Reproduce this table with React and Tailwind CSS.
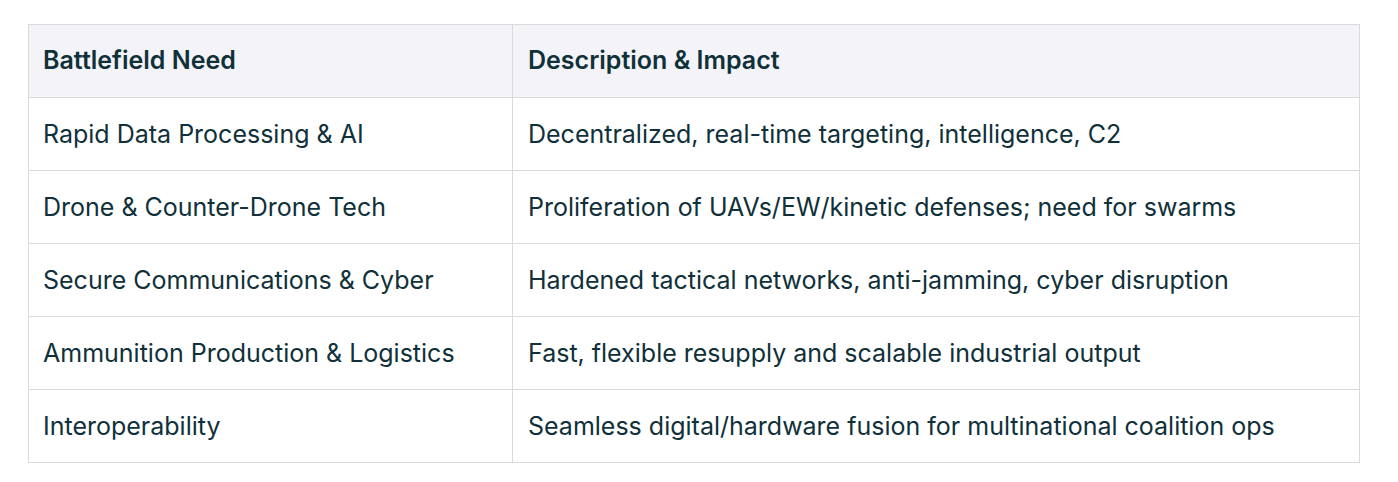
const rows = [
  ['Rapid Data Processing & AI', 'Decentralized, real-time targeting, intelligence, C2'],
  ['Drone & Counter-Drone Tech', 'Proliferation of UAVs/EW/kinetic defenses; need for swarms'],
  ['Secure Communications & Cyber', 'Hardened tactical networks, anti-jamming, cyber disruption'],
  ['Ammunition Production & Logistics', 'Fast, flexible resupply and scalable industrial output'],
  ['Interoperability', 'Seamless digital/hardware fusion for multinational coalition ops'],
]

export default function App() {
  return (
    <div className="bg-white min-h-screen pt-6 pl-7 pr-[38px]" style={{ fontFamily: 'Inter, "Noto Sans", sans-serif' }}>
      <table className="w-[1332px] border-collapse text-[25px] text-[#10303a]">
        <thead>
          <tr className="bg-[#f4f4f8] h-[73px]">
            <th className="w-[484px] border border-[#dadadd] pl-[14px] pr-[15px] text-left font-semibold">Battlefield Need</th>
            <th className="border border-[#dadadd] px-[15px] text-left font-semibold">Description &amp; Impact</th>
          </tr>
        </thead>
        <tbody>
          {rows.map(([need, desc]) => (
            <tr key={need} className="h-[73px]">
              <td className="border border-[#dadadd] pl-[14px] pr-[15px] pt-[2px]">{need}</td>
              <td className="border border-[#dadadd] px-[15px] pt-[2px]">{desc}</td>
            </tr>
          ))}
        </tbody>
      </table>
    </div>
  )
}
